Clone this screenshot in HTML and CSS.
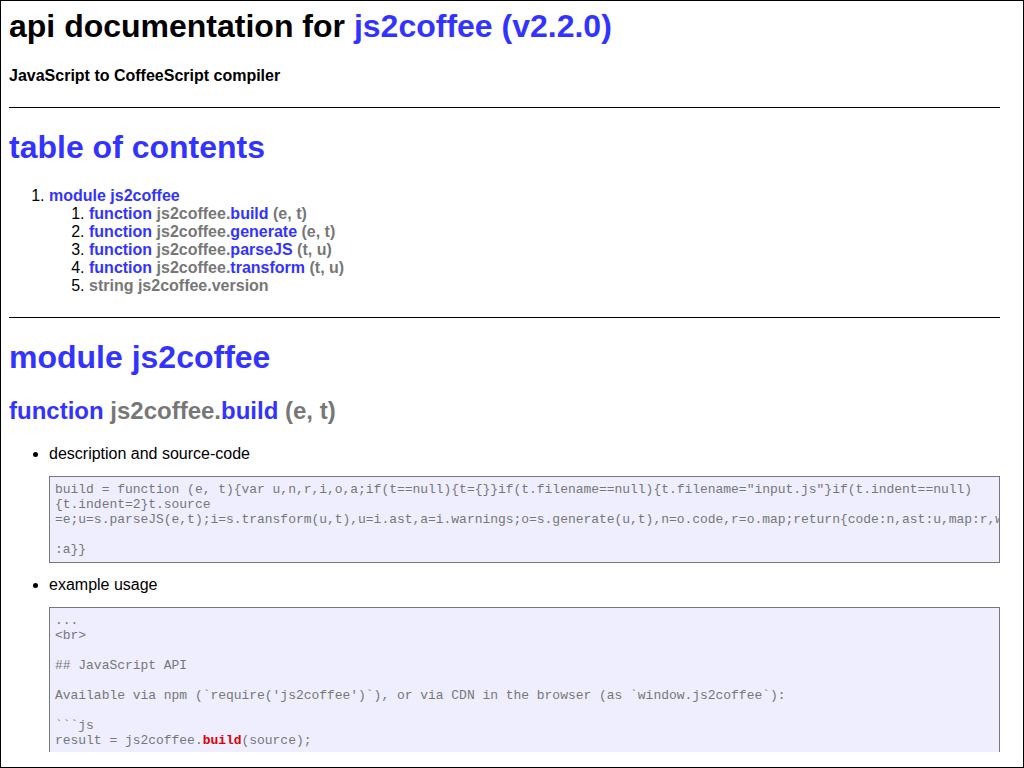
FILE: index.html
```html
<!DOCTYPE html>
<html lang="en" class="page-root">
<head>
<meta charset="utf-8">
<title>api documentation for js2coffee (v2.2.0)</title>
<link rel="stylesheet" href="styles.css">
</head>
<body class="page-body">
<div class="window">
<div class="doc-pane">
<div class="apidocDiv">
<h1 class="title">api documentation for <a href="#">js2coffee (v2.2.0)</a></h1>
<h3 class="subtitle">JavaScript to CoffeeScript compiler</h3>

<div class="apidocSectionDiv">
<a href="#apidoc.tableOfContents"><h1 class="sectionH1">table of contents</h1></a>
<ol class="toc">
<li class="apidocModuleLi"><a href="#apidoc.module.js2coffee">module js2coffee</a>
<ol class="toc-sub">
<li><a href="#apidoc.element.js2coffee.build">function <span class="sig">js2coffee.</span>build <span class="sig">(e, t)</span></a></li>
<li><a href="#apidoc.element.js2coffee.generate">function <span class="sig">js2coffee.</span>generate <span class="sig">(e, t)</span></a></li>
<li><a href="#apidoc.element.js2coffee.parseJS">function <span class="sig">js2coffee.</span>parseJS <span class="sig">(t, u)</span></a></li>
<li><a href="#apidoc.element.js2coffee.transform">function <span class="sig">js2coffee.</span>transform <span class="sig">(t, u)</span></a></li>
<li><span class="sig">string js2coffee.version</span></li>
</ol>
</li>
</ol>
</div>

<div class="apidocSectionDiv">
<a href="#apidoc.module.js2coffee"><h1 class="sectionH1">module js2coffee</h1></a>

<div class="element">
<h2 class="elementH2"><a href="#apidoc.element.js2coffee.build">function <span class="sig">js2coffee.</span>build <span class="sig">(e, t)</span></a></h2>
<ul class="elementUl">
<li>description and source-code
<pre class="code">build = function (e, t){var u,n,r,i,o,a;if(t==null){t={}}if(t.filename==null){t.filename="input.js"}if(t.indent==null)
{t.indent=2}t.source
=e;u=s.parseJS(e,t);i=s.transform(u,t),u=i.ast,a=i.warnings;o=s.generate(u,t),n=o.code,r=o.map;return{code:n,ast:u,map:r,w

:a}}</pre>
</li>
<li>example usage
<pre class="code">...
&lt;br&gt;

## JavaScript API

Available via npm (`require('js2coffee')`), or via CDN in the browser (as `window.js2coffee`):

```js
result = js2coffee.<span class="kw">build</span>(source);

result.code     // code string
result.ast      // transformed AST
result.map      // source map
result.warnings // array of warnings
```

Errors are in this format:

```js
catch (e) {
  e.message       // "index.js:3:1: Unexpected INDENT\n\n3:   var\n---^"
  e.description   // "Unexpected INDENT"
  e.start         // { line: 1, column: 4 }
  e.end           // { line: 1, column: 10 }
  e.sourcePreview // '...'
}
```
...</pre>
</li>
</ul>
</div>

<div class="element">
<h2 class="elementH2"><a href="#apidoc.element.js2coffee.generate">function <span class="sig">js2coffee.</span>generate <span class="sig">(e, t)</span></a></h2>
<ul class="elementUl">
<li>description and source-code
<pre class="code">generate = function (e, t){return(new l(e,t)).get()}</pre>
</li>
<li>example usage
<pre class="code">...
{t.indent=2}t.source=e;u=s.parseJS(e,t);i=s.transform(u,t),u=i.ast,a=i.warnings;o=s.<span class="kw">generate</span>(u,t),n=o.code,r=o.map;return
...</pre>
</li>
</ul>
</div>

<div class="element">
<h2 class="elementH2"><a href="#apidoc.element.js2coffee.parseJS">function <span class="sig">js2coffee.</span>parseJS <span class="sig">(t, u)</span></a></h2>
<ul class="elementUl">
<li>description and source-code
<pre class="code">parseJS = function (t, u){var a;try{return e.parse(t,{loc:!0,range:!0,comment:!0})}catch(f){throw a=f,n(a,t,u.filename)}}</pre>
</li>
<li>example usage
<pre class="code">...
{t.indent=2}t.source=e;u=s.<span class="kw">parseJS</span>(e,t);i=s.transform(u,t),u=i.ast,a=i.warnings;o=s.generate(u,t),n=o.code,r=o.map;return
...</pre>
</li>
</ul>
</div>

<div class="element">
<h2 class="elementH2"><a href="#apidoc.element.js2coffee.transform">function <span class="sig">js2coffee.</span>transform <span class="sig">(t, u)</span></a></h2>
<ul class="elementUl">
<li>description and source-code
<pre class="code">transform = function (t, u){var n,r;return u==null&amp;&amp;(u={}),r={},n=new a,r.warnings=n.warnings,t=s.run(t,u,r),{ast:t,warnings:r.warnings}}</pre>
</li>
<li>example usage
<pre class="code">...
{t.indent=2}t.source=e;u=s.parseJS(e,t);i=s.<span class="kw">transform</span>(u,t),u=i.ast,a=i.warnings;o=s.generate(u,t),n=o.code,r=o.map;return{code:
n,ast:u,map:r,warnings:a}}
...</pre>
</li>
</ul>
</div>

<div class="element">
<h2 class="elementH2"><span class="sig">string js2coffee.version</span></h2>
<ul class="elementUl">
<li>2.2.0</li>
</ul>
</div>
</div>

<div class="apidocFooterDiv">
[ this document was created with <a href="#">utility2</a> ]
</div>
</div>
</div>

<svg class="rail-v" width="15" height="751" viewBox="0 0 15 751">
<rect x="0" y="0" width="15" height="751" fill="#f1f1f1"/>
<polygon points="3.5,10.5 11.5,10.5 7.5,6.5" fill="#a3a3a3"/>
<rect x="2" y="15" width="11" height="323" fill="#c1c1c1"/>
<polygon points="3.5,741 11.5,741 7.5,745" fill="#505050"/>
</svg>

<svg class="rail-h" width="1007" height="15" viewBox="0 0 1007 15">
<rect x="0" y="0" width="1007" height="15" fill="#f1f1f1"/>
<polygon points="9.5,3.5 9.5,11.5 5.5,7.5" fill="#a3a3a3"/>
<rect x="15" y="2" width="944" height="11" fill="#c1c1c1"/>
<polygon points="998,3.5 998,11.5 1002,7.5" fill="#505050"/>
</svg>

<svg class="rail-corner" width="15" height="15" viewBox="0 0 15 15">
<rect x="0" y="0" width="15" height="15" fill="#dcdcdc"/>
</svg>
</div>
</body>
</html>
```

FILE: styles.css
```css
html, body, .page-root, .page-body {
  margin: 0 !important;
  padding: 0 !important;
  width: 1024px;
  height: 768px;
  overflow: hidden;
  background: #fff;
}

/* the whole page is one framed browser window pinned to the viewport */
.window {
  position: fixed;
  top: 0;
  left: 0;
  box-sizing: border-box;
  width: 1024px;
  height: 768px;
  border: 1px solid #000;
  background: #fff;
  display: grid;
  grid-template-columns: 1007px 15px;
  grid-template-rows: 751px 15px;
}

.doc-pane {
  grid-column: 1;
  grid-row: 1;
  width: 1007px;
  height: 751px;
  overflow: hidden;
  background: #fff;
}

/* window rails (scroll bars), drawn as svg */
.rail-v {
  grid-column: 2;
  grid-row: 1;
  display: block;
  width: 15px;
  height: 751px;
}

.rail-h {
  grid-column: 1;
  grid-row: 2;
  display: block;
  width: 1007px;
  height: 15px;
}

.rail-corner {
  grid-column: 2;
  grid-row: 2;
  display: block;
  width: 15px;
  height: 15px;
}

/* document */
.apidocDiv {
  margin: 0 8px;
  padding-bottom: 8px;
  font-family: "Liberation Sans", Arial, Helvetica, sans-serif;
  font-size: 16px;
  color: #000;
  display: flow-root;
}

.apidocDiv a[href] {
  color: #33f;
  font-weight: bold;
  text-decoration: none;
}

.title {
  font-size: 32px;
  font-weight: bold;
  margin: 7px 0 22px;
}

.subtitle {
  font-size: 16px;
  font-weight: bold;
  margin: 0;
}

.apidocSectionDiv {
  border-top: 1px solid #000;
  margin-top: 22px;
}

.sectionH1 {
  font-size: 32px;
  font-weight: bold;
  margin: 21px 0;
}

.toc {
  margin: 16px 0;
  padding-left: 40px;
}

.toc-sub {
  margin: 0;
  padding-left: 40px;
}

.apidocModuleLi {
  margin-top: 10px;
}

.sig {
  color: #777;
  font-weight: bold;
}

.elementH2 {
  font-size: 24px;
  font-weight: bold;
  margin: 20px 0;
}

.elementUl {
  margin: 16px 0;
  padding-left: 40px;
}

.code {
  font-family: "Liberation Mono", "Courier New", monospace;
  font-size: 13px;
  letter-spacing: -0.03px;
  color: #777;
  background: #eef;
  border: 1px solid;
  padding: 5px;
  margin: 13px 0;
  white-space: pre;
  overflow: hidden;
}

.kw {
  color: #d00;
  font-weight: bold;
}

.apidocFooterDiv {
  margin-top: 20px;
  text-align: center;
}
```
